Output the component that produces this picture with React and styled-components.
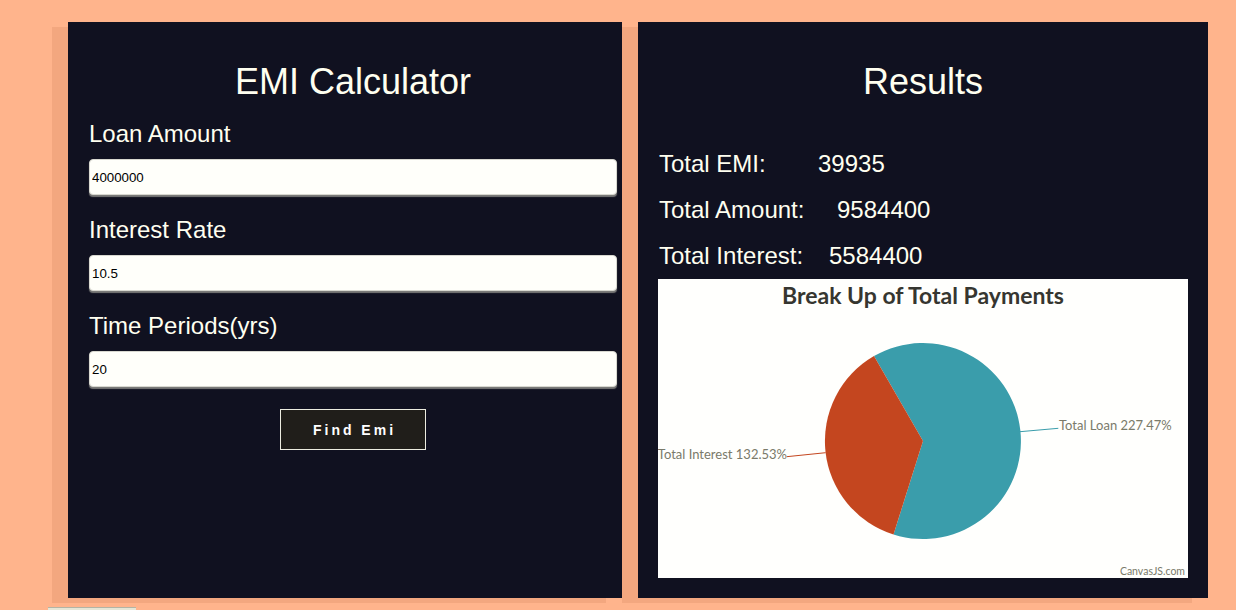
import React from 'react';
import styled, { createGlobalStyle } from 'styled-components';

const GlobalStyle = createGlobalStyle`
  body {
    margin: 0;
    background: #ffb48c;
    font-family: "Liberation Sans", Arial, sans-serif;
  }
`;

const Page = styled.div`
  display: flex;
  gap: 16px;
  padding: 22px 0 0 68px;
`;

const Panel = styled.div`
  box-sizing: border-box;
  width: ${(p) => p.$w}px;
  height: 576px;
  padding: 42px ${(p) => p.$pr}px 0 ${(p) => p.$pl}px;
  background: #101120;
  box-shadow: -16px 5px 0 rgba(120, 40, 0, 0.09);
  display: flex;
  flex-direction: column;
`;

const Title = styled.h1`
  margin: 0;
  font-size: 36px;
  line-height: 36px;
  font-weight: normal;
  text-align: center;
  color: #fffff0;
`;

const Form = styled.div`
  display: flex;
  flex-direction: column;
  margin-top: 22px;
`;

const Field = styled.div`
  display: flex;
  flex-direction: column;
  margin-bottom: 23px;
`;

const Label = styled.label`
  font-size: 24px;
  line-height: 24px;
  color: #fffff0;
  margin-bottom: 13px;
`;

const Input = styled.input`
  box-sizing: border-box;
  width: 528px;
  height: 36px;
  margin: 0;
  padding: 0 2px;
  border: 1px solid #d8d8d0;
  border-radius: 4px;
  background: #fffffa;
  box-shadow: 0 2px 1px #7a7a78;
  font-family: "Liberation Sans", Arial, sans-serif;
  font-size: 13.3px;
  color: #000;
  outline: none;
`;

const Button = styled.button`
  align-self: center;
  width: 146px;
  height: 41px;
  margin-top: -1px;
  background: #201e1a;
  border: 1px solid #ecece0;
  color: #ffffff;
  font-family: "Liberation Sans", Arial, sans-serif;
  font-size: 14px;
  font-weight: bold;
  letter-spacing: 3px;
  padding: 0 0 0 3px;
`;

const Stats = styled.div`
  display: flex;
  flex-direction: column;
  gap: 22px;
  margin-top: 52px;
`;

const StatRow = styled.div`
  display: flex;
  font-size: 24px;
  line-height: 24px;
  color: #fffff0;
`;

const StatLabel = styled.span`
  width: ${(p) => p.$w}px;
  padding-left: 1px;
`;

const Chart = styled.div`
  margin-top: 11px;
  width: 530px;
  height: 299px;
  background: #fffffd;
  display: flex;
  flex-direction: column;
`;

const ChartTitle = styled.div`
  height: 32px;
  line-height: 32px;
  text-align: center;
  font-family: Lato, "Open Sans", sans-serif;
  font-weight: bold;
  font-size: 23px;
  color: #363630;
`;

const Footer = styled.div`
  margin: 9px 0 0 48px;
  width: 88px;
  height: 2px;
  border-top: 1px solid #b4b4a4;
  background: #e6e6d6;
`;

const fields = [
  { label: 'Loan Amount', value: '4000000' },
  { label: 'Interest Rate', value: '10.5' },
  { label: 'Time Periods(yrs)', value: '20' },
];

const stats = [
  { label: 'Total EMI:', value: '39935', w: 159 },
  { label: 'Total Amount:', value: '9584400', w: 178 },
  { label: 'Total Interest:', value: '5584400', w: 170 },
];

function PieChart() {
  return (
    <svg width="530" height="267" viewBox="0 32 530 267">
      <path d="M265 162 L216 77.1 A98 98 0 1 1 235.5 255.5 Z" fill="#3a9dab" />
      <path d="M265 162 L235.5 255.5 A98 98 0 0 1 216 77.1 Z" fill="#c4461f" />
      <path d="M167.7 173.7 L128.7 177.7" stroke="#c4461f" strokeWidth="1" fill="none" />
      <path d="M362 152.7 L400.3 149.3" stroke="#3a9dab" strokeWidth="1" fill="none" />
      <g fontFamily="Lato, 'Open Sans', sans-serif" fill="#7a7a6a">
        <text x="129" y="180" fontSize="13" textAnchor="end">Total Interest 132.53%</text>
        <text x="401" y="151" fontSize="13">Total Loan 227.47%</text>
        <text x="527" y="296" fontSize="10.5" textAnchor="end">CanvasJS.com</text>
      </g>
    </svg>
  );
}

export default function App() {
  return (
    <>
      <GlobalStyle />
      <Page>
        <Panel $w={554} $pl={21} $pr={5}>
          <Title>EMI Calculator</Title>
          <Form>
            {fields.map((f) => (
              <Field key={f.label}>
                <Label>{f.label}</Label>
                <Input type="text" defaultValue={f.value} />
              </Field>
            ))}
            <Button>Find Emi</Button>
          </Form>
        </Panel>
        <Panel $w={570} $pl={20} $pr={20}>
          <Title>Results</Title>
          <Stats>
            {stats.map((s) => (
              <StatRow key={s.label}>
                <StatLabel $w={s.w}>{s.label}</StatLabel>
                <span>{s.value}</span>
              </StatRow>
            ))}
          </Stats>
          <Chart>
            <ChartTitle>Break Up of Total Payments</ChartTitle>
            <PieChart />
          </Chart>
        </Panel>
      </Page>
      <Footer />
    </>
  );
}
